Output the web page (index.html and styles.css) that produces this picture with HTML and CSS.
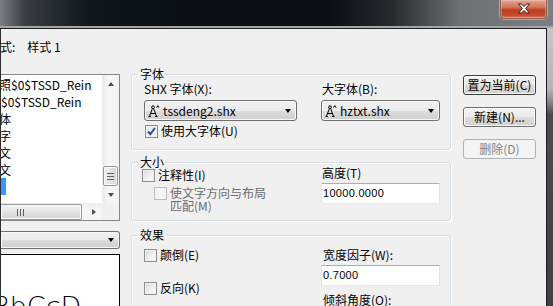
FILE: index.html
```html
<!DOCTYPE html>
<html lang="zh-CN">
<head>
    <meta charset="UTF-8">
    <meta name="viewport" content="width=device-width, initial-scale=1.0">
    <title>文字样式</title>
    <link rel="stylesheet" href="styles.css">
</head>
<body>
<div class="window">
    <!-- 标题栏 -->
    <div class="titlebar">
        <button class="close-btn" aria-label="关闭">
            <svg width="14" height="11" viewBox="0 0 14 11">
                <path d="M1.5 1 H4.5 L7 3.6 L9.5 1 H12.5 L8.6 5.5 L12.5 10 H9.5 L7 7.4 L4.5 10 H1.5 L5.4 5.5 Z" fill="#fff" stroke="#3a1a14" stroke-width="1"/>
            </svg>
        </button>
    </div>
    <div class="title-edge"></div>

    <div class="frame">
        <div class="client">
            <div class="style-name">
                <span class="style-label">样式:</span><span class="style-value">样式 1</span>
            </div>

            <div class="main">
                <!-- 左侧：样式列表与预览 -->
                <div class="left-col">
                    <div class="listbox">
                        <div class="list-view">
                            <div class="list-items">
                                <div class="item cut">照$0$TSSD_Rein</div>
                                <div class="item">$0$TSSD_Rein</div>
                                <div class="item cut">体</div>
                                <div class="item cut">字</div>
                                <div class="item cut">文</div>
                                <div class="item cut">文</div>
                                <div class="item"><span class="selected"></span></div>
                            </div>
                            <div class="vscroll">
                                <div class="sb-btn"><span class="arrow-up"></span></div>
                                <div class="sb-track">
                                    <div class="vthumb"><span class="grip-h"></span></div>
                                </div>
                                <div class="sb-btn"><span class="arrow-down"></span></div>
                            </div>
                        </div>
                        <div class="hscroll">
                            <div class="hthumb"><span class="grip-v"></span></div>
                            <div class="sb-track"></div>
                            <div class="sb-btn"><span class="arrow-right"></span></div>
                            <div class="sb-corner"></div>
                        </div>
                    </div>

                    <div class="combo filter-combo">
                        <span class="combo-arrow"></span>
                    </div>

                    <div class="preview">
                        <span class="preview-text">AaBbCcD</span>
                    </div>
                </div>

                <!-- 中间：分组 -->
                <div class="groups">
                    <fieldset class="group font-group">
                        <legend>字体</legend>
                        <div class="group-grid">
                            <div class="col">
                                <div class="field-label">SHX 字体(X):</div>
                                <div class="combo shx-combo">
                                    <svg class="shx-icon" width="12" height="12" viewBox="0 0 12 12">
                                        <g fill="none" stroke="#000" stroke-width="1">
                                            <circle cx="5" cy="2.2" r="1.4"/>
                                            <path d="M4.4 3.5 L1.6 11 M5.6 3.5 L8.4 11 M2.6 8.5 H7.4 M0.5 11.5 H2.8 M7.2 11.5 H9.5 M8.6 2.6 L9.8 0.6 L11 2.6"/>
                                        </g>
                                    </svg>
                                    <span class="combo-text">tssdeng2.shx</span>
                                    <span class="combo-arrow"></span>
                                </div>
                                <label class="check use-big">
                                    <span class="box checked">
                                        <svg width="11" height="11" viewBox="0 0 11 11">
                                            <path d="M2 5.5 L4.3 8.2 L9 2" fill="none" stroke="#2a4fa8" stroke-width="2"/>
                                        </svg>
                                    </span>
                                    <span>使用大字体(U)</span>
                                </label>
                            </div>
                            <div class="col col-right">
                                <div class="field-label">大字体(B):</div>
                                <div class="combo big-combo">
                                    <svg class="shx-icon" width="12" height="12" viewBox="0 0 12 12">
                                        <g fill="none" stroke="#000" stroke-width="1">
                                            <circle cx="5" cy="2.2" r="1.4"/>
                                            <path d="M4.4 3.5 L1.6 11 M5.6 3.5 L8.4 11 M2.6 8.5 H7.4 M0.5 11.5 H2.8 M7.2 11.5 H9.5 M8.6 2.6 L9.8 0.6 L11 2.6"/>
                                        </g>
                                    </svg>
                                    <span class="combo-text">hztxt.shx</span>
                                    <span class="combo-arrow"></span>
                                </div>
                            </div>
                        </div>
                    </fieldset>

                    <fieldset class="group size-group">
                        <legend>大小</legend>
                        <div class="group-grid">
                            <div class="col">
                                <label class="check annot">
                                    <span class="box"></span>
                                    <span>注释性(I)</span>
                                </label>
                                <label class="check match disabled">
                                    <span class="box"></span>
                                    <span class="two-line">使文字方向与布局<br>匹配(M)</span>
                                </label>
                            </div>
                            <div class="col col-right">
                                <div class="field-label up">高度(T)</div>
                                <div class="textbox">10000.0000</div>
                            </div>
                        </div>
                    </fieldset>

                    <fieldset class="group effect-group">
                        <legend>效果</legend>
                        <div class="group-grid">
                            <div class="col">
                                <label class="check flip">
                                    <span class="box"></span>
                                    <span>颠倒(E)</span>
                                </label>
                                <label class="check reverse">
                                    <span class="box"></span>
                                    <span>反向(K)</span>
                                </label>
                            </div>
                            <div class="col col-right">
                                <div class="field-label low">宽度因子(W):</div>
                                <div class="textbox">0.7000</div>
                                <div class="field-label low">倾斜角度(O):</div>
                            </div>
                        </div>
                    </fieldset>
                </div>

                <!-- 右侧按钮 -->
                <div class="buttons">
                    <button class="btn default">置为当前(C)</button>
                    <button class="btn">新建(N)...</button>
                    <button class="btn" disabled>删除(D)</button>
                </div>
            </div>
        </div>
        <div class="side-frame"></div>
    </div>
</div>
</body>
</html>
```

FILE: styles.css
```css
/* 基本设置 */
* {
    box-sizing: border-box;
}

body {
    margin: 0;
    font-family: "Noto Sans CJK SC", "Noto Sans", sans-serif;
    font-size: 12px;
    color: #000;
    background: #f0f0f0;
}

.window {
    width: 553px;
    height: 306px;
    overflow: hidden;
}

/* 标题栏 */
.titlebar {
    height: 26px;
    display: flex;
    justify-content: flex-end;
    align-items: flex-start;
    padding-right: 6px;
    background: linear-gradient(90deg, #7a7e82 0, #3a3e42 25px, #11161b 90px, #0a0e12 200px, #0b0f13 330px, #26292c 390px, #6c7073 460px, #7b7f81 553px);
}

.close-btn {
    width: 47px;
    height: 19px;
    padding: 0;
    border: 1px solid #8c5a50;
    border-top: none;
    border-radius: 0 0 4px 4px;
    background: linear-gradient(#e3a796, #d27458 40%, #bd3e1e 55%, #c4492a 85%, #d8805f);
    box-shadow: inset 0 0 0 1px rgba(255, 220, 200, 0.35), 0 0 0 1px rgba(220, 220, 220, 0.5);
    display: flex;
    align-items: center;
    justify-content: center;
}

.close-btn svg {
    display: block;
    margin-top: -1px;
}

.title-edge {
    height: 2px;
    background: #a3a6a9;
}

/* 窗口主体 */
.frame {
    display: flex;
    height: 278px;
}

.client {
    flex: 1;
    border-top: 1px solid #202020;
    border-left: 1px solid #2e2e2e;
    border-right: 1px solid #1c1c1c;
    background: #f0f0f0;
    padding-top: 9px;
    overflow: hidden;
}

.side-frame {
    width: 6px;
    background: linear-gradient(#c4c7c9 0, #b3b6b8 60px, #8d9092 72px, #4a4d50 86px, #3e4143 100%);
}

.style-name {
    line-height: 17px;
    height: 17px;
    white-space: nowrap;
}

.style-label {
    margin-left: -13px;
}

.style-value {
    margin-left: 12px;
}

.main {
    display: flex;
    align-items: flex-start;
    margin-top: 13px;
}

/* 左侧列表 */
.left-col {
    width: 119px;
    margin-top: 6px;
    flex-shrink: 0;
}

.listbox {
    height: 147px;
    border: 1px solid #828790;
    border-left: none;
    background: #fff;
}

.list-view {
    display: flex;
    height: 128px;
}

.list-items {
    flex: 1;
    padding-top: 1px;
    overflow: hidden;
    white-space: nowrap;
}

.item {
    height: 17px;
    line-height: 17px;
}

.item.cut {
    margin-left: -2px;
}

.selected {
    display: inline-block;
    width: 5px;
    height: 17px;
    vertical-align: top;
    background: #3399ff;
}

.vscroll {
    width: 17px;
    display: flex;
    flex-direction: column;
    background: linear-gradient(90deg, #e9e9e9, #f6f6f6 40%, #f2f2f2);
}

.sb-btn {
    width: 17px;
    height: 17px;
    display: flex;
    align-items: center;
    justify-content: center;
    flex-shrink: 0;
}

.sb-track {
    flex: 1;
    display: flex;
    flex-direction: column;
    justify-content: flex-end;
}

.vthumb {
    height: 20px;
    margin: 0 1px 0 1px;
    border: 1px solid #979797;
    border-radius: 2px;
    background: linear-gradient(90deg, #f1f1f1, #e4e4e4 50%, #d4d4d4);
    box-shadow: inset 0 0 0 1px #fafafa;
    display: flex;
    align-items: center;
    justify-content: center;
}

.grip-h {
    width: 7px;
    height: 7px;
    background: repeating-linear-gradient(#606060 0, #606060 1px, transparent 1px, transparent 3px);
}

.arrow-up, .arrow-down, .arrow-right {
    width: 0;
    height: 0;
    border-style: solid;
    border-color: transparent;
}

.arrow-up {
    border-width: 0 3.5px 4px 3.5px;
    border-bottom-color: #4d4d4d;
}

.arrow-down {
    border-width: 4px 3.5px 0 3.5px;
    border-top-color: #4d4d4d;
}

.arrow-right {
    border-width: 3.5px 0 3.5px 4px;
    border-left-color: #4d4d4d;
}

.hscroll {
    display: flex;
    height: 17px;
    background: linear-gradient(#ececec, #f7f7f7 40%, #f3f3f3);
}

.hscroll .sb-track {
    display: block;
}

.hthumb {
    width: 81px;
    height: 16px;
    margin-top: 1px;
    border: 1px solid #979797;
    border-left: none;
    border-radius: 0 2px 2px 0;
    background: linear-gradient(#f1f1f1, #e4e4e4 50%, #d4d4d4);
    box-shadow: inset 0 0 0 1px #fafafa;
    display: flex;
    align-items: center;
    padding-left: 16px;
}

.grip-v {
    width: 7px;
    height: 7px;
    background: repeating-linear-gradient(90deg, #606060 0, #606060 1px, transparent 1px, transparent 3px);
}

.sb-corner {
    width: 17px;
    background: #f0f0f0;
}

/* 下拉框 */
.combo {
    display: flex;
    align-items: center;
    height: 21px;
    border: 1px solid #707070;
    border-radius: 3px;
    background: linear-gradient(#f2f2f2, #ebebeb 50%, #dddddd 50%, #cfcfcf);
    box-shadow: inset 0 0 0 1px #f8f8f8;
    padding: 0 5px 0 3px;
    white-space: nowrap;
}

.combo-arrow {
    margin-left: auto;
    width: 0;
    height: 0;
    border-style: solid;
    border-color: #000 transparent transparent transparent;
    border-width: 4px 3.5px 0 3.5px;
}

.filter-combo {
    height: 18px;
    margin-top: 10px;
    border-left: none;
    border-radius: 0 3px 3px 0;
}

.preview {
    margin-top: 5px;
    height: 60px;
    border: 1px solid #000;
    border-left: none;
    background: #fff;
    overflow: hidden;
    white-space: nowrap;
}

.preview-text {
    display: block;
    margin: 37px 0 0 -44px;
    font-family: "DejaVu Sans", sans-serif;
    font-weight: 200;
    font-stretch: condensed;
    font-size: 27px;
    line-height: 30px;
}

/* 分组框 */
.groups {
    width: 320px;
    margin-left: 11px;
    flex-shrink: 0;
}

.group {
    margin: 0;
    min-width: 0;
    padding: 0 9px 0 11px;
    border: 1px solid #d5dfe5;
    border-radius: 3px;
    box-shadow: inset 1px 1px 0 #fff, 1px 1px 0 #fff;
}

.group legend {
    padding: 0 2px;
    margin-left: -5px;
    line-height: 12px;
    height: 12px;
}

.group-grid {
    display: grid;
    grid-template-columns: 177px 1fr;
    align-items: start;
}

.col-right {
    padding-left: 1px;
}

.field-label {
    line-height: 14px;
    height: 14px;
    padding-left: 1px;
    white-space: nowrap;
}

.font-group {
    padding-bottom: 11px;
}

.font-group .group-grid {
    margin-top: 2px;
}

.shx-combo {
    width: 153px;
    margin-left: 1px;
    margin-top: 4px;
}

.big-combo {
    width: 119px;
    margin-top: 4px;
}

.shx-icon {
    display: block;
    flex-shrink: 0;
    margin-right: 3px;
}

.combo-text {
    line-height: 14px;
}

.check {
    display: flex;
    align-items: center;
    gap: 3px;
    line-height: 14px;
    white-space: nowrap;
}

.box {
    width: 13px;
    height: 13px;
    flex-shrink: 0;
    border: 1px solid #8f8f8f;
    background: linear-gradient(135deg, #d6d8dc, #f6f6f6 70%, #fff);
    box-shadow: inset 0 0 0 1px #f0f0f0;
    display: flex;
    align-items: center;
    justify-content: center;
}

.box.checked {
    background: linear-gradient(135deg, #e2e4e8, #fafafa);
}

.box svg {
    display: block;
}

.use-big {
    margin-top: 3px;
    margin-left: 2px;
}

.size-group {
    margin-top: 6px;
    padding-bottom: 8px;
}

.annot {
    margin-left: -1px;
}

.match {
    margin-top: 5px;
    margin-left: 11px;
    align-items: flex-start;
}

.two-line {
    display: block;
    line-height: 13px;
    margin-top: -1px;
}

.disabled {
    color: #6d6d6d;
}

.disabled .box {
    border-color: #bcbcbc;
    background: #f4f4f4;
    box-shadow: none;
}

.field-label.up {
    margin-top: -2px;
}

.textbox {
    width: 119px;
    height: 21px;
    margin-top: 3px;
    border: 1px solid #e2e3ea;
    border-top-color: #abadb3;
    border-bottom-color: #e3e9ef;
    background: #fff;
    padding-left: 1px;
    font-family: "Liberation Sans", Arial, sans-serif;
    font-size: 11px;
    letter-spacing: 0.3px;
    line-height: 19px;
}

.effect-group {
    margin-top: 8px;
    padding-bottom: 20px;
}

.flip {
    margin-top: 7px;
    margin-left: 1px;
}

.reverse {
    margin-top: 19px;
    margin-left: 1px;
}

.field-label.low {
    margin-top: 7px;
    padding-left: 2px;
}

/* 右侧按钮 */
.buttons {
    display: flex;
    flex-direction: column;
    gap: 12px;
    margin-left: 12px;
    margin-top: 7px;
}

.btn {
    width: 73px;
    height: 20px;
    padding: 0;
    border: 1px solid #707070;
    border-radius: 3px;
    background: linear-gradient(#f2f2f2, #ebebeb 50%, #dddddd 50%, #cfcfcf);
    box-shadow: inset 0 0 0 1px #fcfcfc;
    font-family: "Noto Sans CJK SC", "Noto Sans", sans-serif;
    font-size: 12px;
    line-height: 16px;
    color: #000;
    white-space: nowrap;
}

.btn.default {
    border-color: #3c3c3c;
}

.btn:disabled {
    border-color: #adb2b5;
    background: #f4f4f4;
    box-shadow: none;
    color: #838383;
}
```
